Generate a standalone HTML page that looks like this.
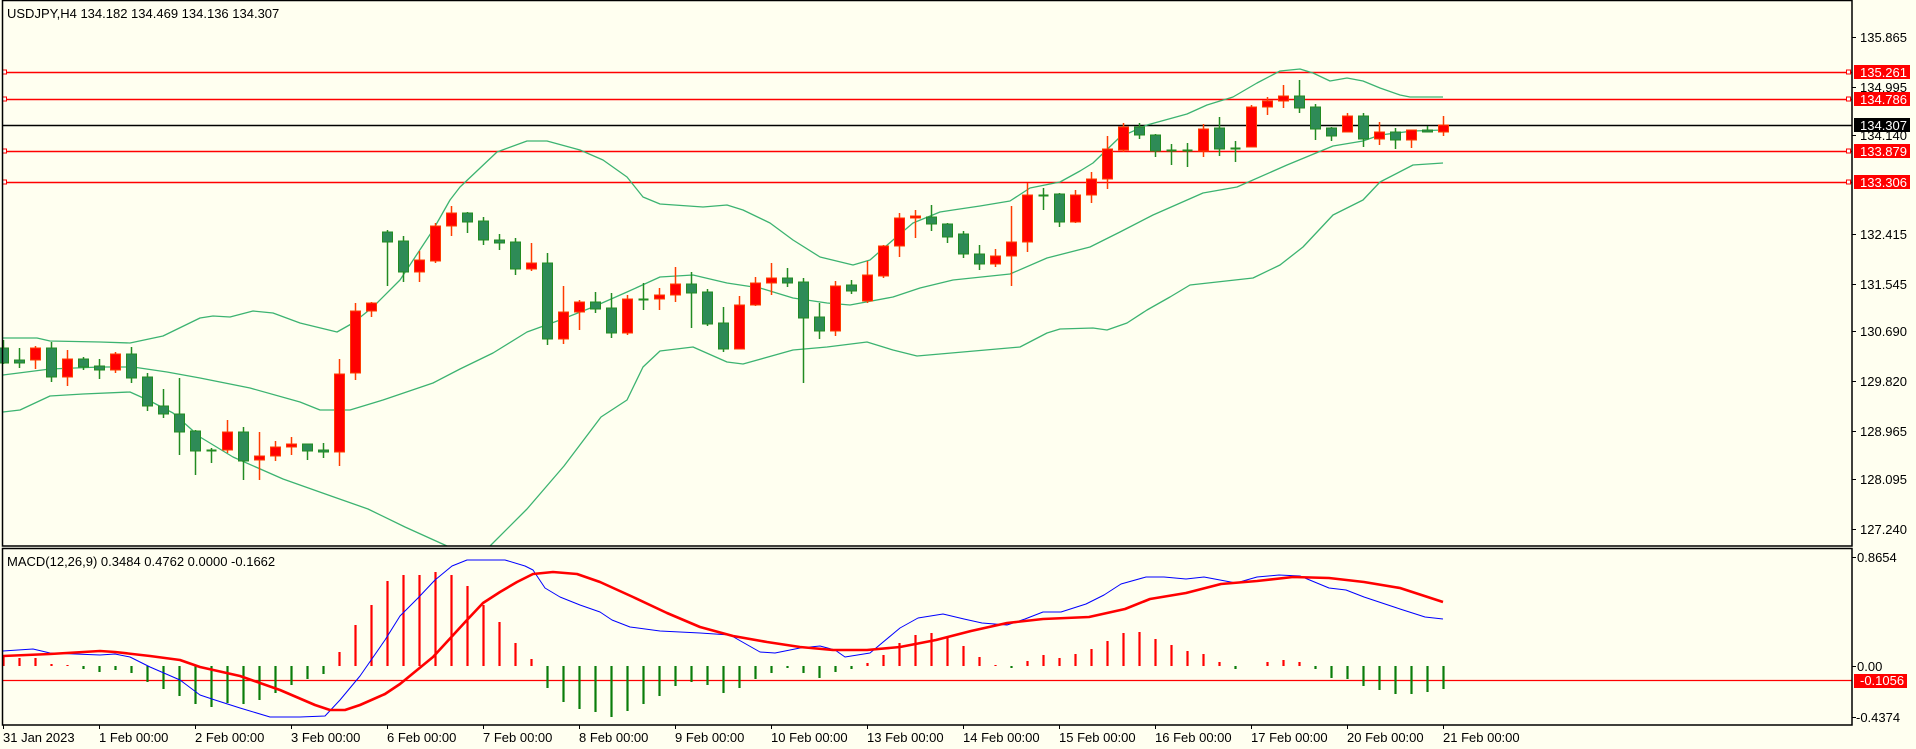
<!DOCTYPE html>
<html><head><meta charset="utf-8">
<style>
html,body{margin:0;padding:0;background:#fffff0;}
body{width:1916px;height:749px;overflow:hidden;position:relative;font-family:"Liberation Sans","DejaVu Sans",sans-serif;}
svg{position:absolute;left:0;top:0;}
text{font-family:"Liberation Sans","DejaVu Sans",sans-serif;font-size:13px;}
</style></head><body>
<svg id="s" width="1916" height="749" xmlns="http://www.w3.org/2000/svg">
<rect x="0" y="0" width="1916" height="749" fill="#fffff0"/>
<g id="g"></g>
<rect x="2.5" y="0.5" width="1849.5" height="545.5" fill="none" stroke="#000" stroke-width="1.5"/>
<rect x="2.5" y="548.5" width="1849.5" height="176.5" fill="none" stroke="#000" stroke-width="1.5"/>
<text x="7" y="18" font-size="12.5">USDJPY,H4  134.182 134.469 134.136 134.307</text>
<text x="7" y="566" font-size="12.5">MACD(12,26,9) 0.3484 0.4762 0.0000 -0.1662</text>
</svg>
<script>
var g=document.getElementById('g');var h='';
function L(x1,y1,x2,y2,c,w){h+='<line x1="'+x1+'" y1="'+y1+'" x2="'+x2+'" y2="'+y2+'" stroke="'+c+'" stroke-width="'+(w||1)+'"/>';}
function P(pts,c,w){h+='<polyline fill="none" stroke="'+c+'" stroke-width="'+w+'" stroke-linejoin="round" points="'+pts.map(function(p){return p.join(',')}).join(' ')+'"/>';}
function T(x,y,s,c){h+='<text x="'+x+'" y="'+y+'" fill="'+(c||'#000')+'">'+s+'</text>';}
[[72,'#ff0000'],[99,'#ff0000'],[151,'#ff0000'],[182,'#ff0000']].forEach(function(a){L(3,a[0]+.5,1852,a[0]+.5,a[1],1.5);
 h+='<rect x="2.5" y="'+(a[0]-2)+'" width="4" height="4" fill="#fff" stroke="#f00" stroke-width="1"/>';
 h+='<rect x="1846.5" y="'+(a[0]-2)+'" width="4" height="4" fill="#fff" stroke="#f00" stroke-width="1"/>';});
L(3,125.5,1852,125.5,'#000',1.5);
var bc='#3cb371';
P([[3,338],[37,338],[50,341],[100,342],[130,343],[163,336],[200,318],[213,316],[230,317],[253,311],[273,313],[300,323],[337,332],[353,323],[373,307],[400,280],[433,230],[450,200],[460,187],[497,152],[527,141],[547,141],[580,150],[603,160],[627,177],[643,197],[660,204],[703,207],[727,205],[743,210],[770,223],[793,240],[820,257],[853,265],[870,260],[893,240],[913,223],[940,212],[953,210],[980,206],[1010,201],[1030,188],[1060,182],[1080,171],[1093,163],[1120,137],[1147,125],[1187,114],[1207,105],[1233,97],[1257,83],[1280,71],[1300,69],[1313,73],[1330,81],[1347,78],[1363,81],[1380,88],[1400,95],[1410,97],[1443,97]],bc,1.3);
P([[3,375],[50,369],[100,367],[133,367],[167,372],[200,378],[250,388],[300,402],[320,410],[350,410],[383,400],[433,383],[460,369],[493,353],[527,332],[560,320],[593,307],[627,292],[660,277],[693,275],[727,283],[760,288],[793,298],[827,303],[850,305],[893,297],[920,288],[953,280],[1010,274],[1047,258],[1090,247],[1120,232],[1153,215],[1203,193],[1237,187],[1287,165],[1333,146],[1363,141],[1380,135],[1413,131],[1443,130]],bc,1.3);
P([[3,412],[20,410],[50,396],[83,394],[130,392],[150,401],[173,413],[200,437],[233,457],[283,479],[331,496],[368,509],[405,527],[447,546]],bc,1.3);
P([[490,546],[527,509],[564,466],[601,417],[627,400],[643,367],[660,351],[693,347],[727,362],[743,364],[793,350],[827,347],[867,342],[893,350],[917,356],[940,354],[1020,347],[1047,333],[1060,329],[1093,328],[1107,330],[1127,323],[1147,310],[1170,297],[1190,285],[1253,278],[1280,265],[1303,247],[1333,215],[1363,200],[1380,182],[1413,165],[1443,163]],bc,1.3);
var C=[[348,363,340,364],[360,363,348,368],[360,348,346,369],[348,377,342,382],[377,359,350,386],[359,367,357,370],[366,370,359,379],[370,354,352,373],[354,378,347,383],[377,406,373,411],
[406,414,389,418],[414,432,378,455],[431,451,430,475],[450,450,448,463],[450,432,420,453],[432,461,427,480],[460,456,432,480],[456,447,441,461],[447,444,437,455],[444,451,444,460],
[450,452,443,458],[452,374,359,466],[373,311,303,380],[311,303,302,317],[232,242,230,286],[241,272,236,282],[272,260,251,282],[261,226,223,263],[226,213,206,236],[213,222,212,233],
[221,240,217,245],[240,243,234,250],[242,269,238,275],[269,263,243,271],[263,339,253,345],[339,312,286,344],[312,302,300,330],[302,309,292,313],[308,333,293,338],[333,299,295,335],
[299,299,283,310],[299,295,288,310],[295,284,267,302],[284,293,272,328],[292,324,289,326],[323,349,307,352],[349,305,296,349],[305,283,277,306],[283,278,263,295],[278,283,268,287],
[282,318,278,383],[317,331,303,339],[331,286,281,336],[285,291,280,294],[301,275,261,303],[276,246,245,278],[246,218,213,257],[218,216,210,238],[217,224,205,231],[224,237,223,243],
[234,254,231,258],[254,264,245,270],[264,256,249,267],[256,242,206,286],[242,195,183,252],[195,195,188,210],[194,222,193,227],[222,195,190,223],[195,179,172,203],[179,149,136,189],
[150,127,123,152],[127,135,123,139],[135,151,134,157],[150,150,144,165],[150,150,143,167],[151,129,124,157],[128,149,117,156],[148,148,141,162],[147,107,105,147],[107,101,97,115],
[101,96,85,108],[96,108,80,113],[107,129,104,140],[128,136,127,141],[132,116,113,132],[116,139,113,147],[139,132,122,145],[132,140,128,149],[140,130,130,148],[130,132,126,132],[132,125,116,136]];
C.forEach(function(c,i){var x=3.5+16*i;var bull=c[1]<c[0];var wc=bull?'#ff3c00':'#228b22';var fc=bull?'#ff0000':'#2e8b57';
 L(x,c[2],x,c[3],wc,1.5);var t=Math.min(c[0],c[1]),b=Math.max(c[0],c[1]);
 if(b-t<2){L(x-5,t+.5,x+5,t+.5,wc,2);}else{h+='<rect x="'+(x-5)+'" y="'+t+'" width="10" height="'+(b-t)+'" fill="'+fc+'" stroke="'+wc+'" stroke-width="1"/>';}});
L(3,680.5,1852,680.5,'#ff0000',1.2);
var Hs=[657,658,658,664,665,669,672,670,673,682,689,696,704,707,703,704,700,693,685,679,674,652,625,605,581,
575,575,572,575,586,605,622,643,659,688,702,709,712,717,711,704,696,686,682,685,693,688,679,673,668,673,678,672,669,663,655,643,
635,633,638,646,657,665,668,661,655,658,654,649,641,633,632,639,645,651,654,662,669,666,662,660,662,669,678,679,686,690,694,694,692,689];
Hs.forEach(function(v,i){var x=3.5+16*i;if(Math.abs(v-666)<1)return;L(x,666,x,v,v<666?'#ff0000':'#0a7d0a',2.2);});
P([[3,651],[33,649],[50,653],[100,655],[115,654],[130,657],[150,667],[180,680],[200,695],[215,700],[240,708],[270,717],[300,717],[325,716],[340,700],[360,676],[385,640],[400,616],[418,598],[435,580],[452,566],[467,560],[505,560],[525,566],[533,570],[545,588],[560,597],[580,605],[600,612],[612,620],[630,627],[660,631],[700,633],[730,635],[760,652],[775,653],[800,648],[820,646],[835,650],[845,657],[870,653],[900,628],[918,618],[943,614],[964,619],[982,623],[1007,625],[1025,619],[1043,612],[1061,612],[1086,604],[1104,595],[1121,584],[1146,577],[1164,577],[1186,579],[1204,577],[1236,583],[1257,577],[1279,575],[1300,576],[1329,588],[1346,590],[1364,597],[1400,609],[1425,617],[1443,619]],'#0000ff',1);
P([[3,656],[50,654],[100,651],[115,652],[150,656],[180,660],[200,667],[240,676],[280,690],[315,705],[330,710],[345,710],[360,705],[385,694],[400,684],[433,657],[467,620],[483,603],[500,592],[517,582],[533,574],[553,572],[577,574],[600,582],[633,597],[667,613],[700,627],[733,636],[767,642],[800,647],[833,650],[867,650],[900,647],[936,640],[971,631],[1007,623],[1043,619],[1089,617],[1125,609],[1150,599],[1186,593],[1221,584],[1257,581],[1293,577],[1329,578],[1364,582],[1400,588],[1443,602]],'#ff0000',2.6);
[[37,'135.865'],[87,'134.995'],[135,'134.140'],[234,'132.415'],[284,'131.545'],[331,'130.690'],[381,'129.820'],[431,'128.965'],[479,'128.095'],[529,'127.240']].forEach(function(a){L(1852,a[0]+.5,1856,a[0]+.5,'#000',1);T(1860,a[0]+5,a[1]);});
[[72,'135.261','#ff0000'],[99,'134.786','#ff0000'],[151,'133.879','#ff0000'],[182,'133.306','#ff0000'],[125,'134.307','#000']].forEach(function(a){h+='<rect x="1854" y="'+(a[0]-7)+'" width="56" height="14" fill="'+a[2]+'"/>';T(1860,a[0]+5,a[1],'#fff');});
L(1852,557.5,1856,557.5,'#000',1);T(1857,562,'0.8654');
L(1852,666.5,1856,666.5,'#000',1);T(1857,671,'0.00');
L(1852,717.5,1856,717.5,'#000',1);T(1856,722,'-0.4374');
h+='<rect x="1854" y="674" width="53" height="14" fill="#ff0000"/>';T(1860,685,'-0.1056','#fff');
var tl=['31 Jan 2023','1 Feb 00:00','2 Feb 00:00','3 Feb 00:00','6 Feb 00:00','7 Feb 00:00','8 Feb 00:00','9 Feb 00:00','10 Feb 00:00','13 Feb 00:00','14 Feb 00:00','15 Feb 00:00','16 Feb 00:00','17 Feb 00:00','20 Feb 00:00','21 Feb 00:00'];
tl.forEach(function(s,i){var x=3+96*i;L(x+.5,725,x+.5,729,'#000',1);T(x,742,s);});
g.innerHTML=h;
</script>
</body></html>
